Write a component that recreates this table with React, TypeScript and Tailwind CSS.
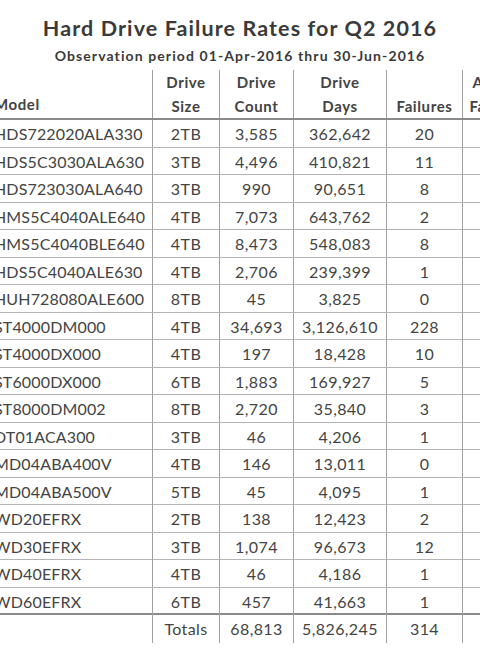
import React from "react";

type Row = [string, string, string, string, string];

const rows: Row[] = [
  ["HDS722020ALA330", "2TB", "3,585", "362,642", "20"],
  ["HDS5C3030ALA630", "3TB", "4,496", "410,821", "11"],
  ["HDS723030ALA640", "3TB", "990", "90,651", "8"],
  ["HMS5C4040ALE640", "4TB", "7,073", "643,762", "2"],
  ["HMS5C4040BLE640", "4TB", "8,473", "548,083", "8"],
  ["HDS5C4040ALE630", "4TB", "2,706", "239,399", "1"],
  ["HUH728080ALE600", "8TB", "45", "3,825", "0"],
  ["ST4000DM000", "4TB", "34,693", "3,126,610", "228"],
  ["ST4000DX000", "4TB", "197", "18,428", "10"],
  ["ST6000DX000", "6TB", "1,883", "169,927", "5"],
  ["ST8000DM002", "8TB", "2,720", "35,840", "3"],
  ["DT01ACA300", "3TB", "46", "4,206", "1"],
  ["MD04ABA400V", "4TB", "146", "13,011", "0"],
  ["MD04ABA500V", "5TB", "45", "4,095", "1"],
  ["WD20EFRX", "2TB", "138", "12,423", "2"],
  ["WD30EFRX", "3TB", "1,074", "96,673", "12"],
  ["WD40EFRX", "4TB", "46", "4,186", "1"],
  ["WD60EFRX", "6TB", "457", "41,663", "1"],
];

const cols = "grid grid-cols-[163px_67px_74px_93px_76px_100px_60px]";
const vline = "border-r border-[#a0a0a0]";

export default function App() {
  return (
    <div className="h-[650px] w-[480px] overflow-hidden bg-white text-[#444444] [font-family:Lato,'Liberation_Sans',sans-serif]">
      <div className="pt-[14px] text-center">
        <h1 className="h-[28px] whitespace-nowrap text-[21.5px] font-bold leading-[28px] tracking-[1.1px] text-[#3a3a3a]">
          Hard Drive Failure Rates for Q2 2016
        </h1>
        <p className="mt-[4px] h-[20px] whitespace-nowrap text-[14px] font-bold leading-[20px] tracking-[1.1px] text-[#3a3a3a]">
          Observation period 01-Apr-2016 thru 30-Jun-2016
        </p>
      </div>

      <div className="-ml-[10px] mt-[4px] w-[640px]">
        {/* header */}
        <div className={`${cols} h-[50px] border-b-2 border-[#8a8a8a] text-[15px] font-bold leading-[24px] tracking-[0.6px]`}>
          <div className={`${vline} flex items-end pb-[2px] pl-[4px]`}>Model</div>
          <div className={`${vline} flex flex-col items-center justify-end`}>
            <span>Drive</span>
            <span>Size</span>
          </div>
          <div className={`${vline} flex flex-col items-center justify-end`}>
            <span>Drive</span>
            <span>Count</span>
          </div>
          <div className={`${vline} flex flex-col items-center justify-end`}>
            <span>Drive</span>
            <span>Days</span>
          </div>
          <div className={`${vline} flex flex-col items-center justify-end`}>
            <span>Failures</span>
          </div>
          <div className={`${vline} flex flex-col items-center justify-end whitespace-nowrap`}>
            <span>Annualized</span>
            <span>Failure Rate</span>
          </div>
          <div />
        </div>

        {/* body */}
        {rows.map((r, i) => (
          <div
            key={r[0]}
            className={`${cols} h-[27.5px] text-[16px] leading-[27px] tracking-[0.4px] ${
              i === rows.length - 1 ? "border-b-2 border-[#8a8a8a]" : "border-b border-[#b4b4b4]"
            }`}
          >
            <div className={`${vline} pl-[4px] whitespace-nowrap tracking-[0.15px]`}>{r[0]}</div>
            <div className={`${vline} text-center`}>{r[1]}</div>
            <div className={`${vline} text-center`}>{r[2]}</div>
            <div className={`${vline} text-center`}>{r[3]}</div>
            <div className={`${vline} text-center`}>{r[4]}</div>
            <div className={vline} />
            <div />
          </div>
        ))}

        {/* totals */}
        <div className={`${cols} h-[28px] text-[16px] leading-[28px] tracking-[0.4px]`}>
          <div className={vline} />
          <div className={`${vline} text-center`}>Totals</div>
          <div className={`${vline} text-center`}>68,813</div>
          <div className={`${vline} text-center`}>5,826,245</div>
          <div className={`${vline} text-center`}>314</div>
          <div className={vline} />
          <div />
        </div>
      </div>
    </div>
  );
}
